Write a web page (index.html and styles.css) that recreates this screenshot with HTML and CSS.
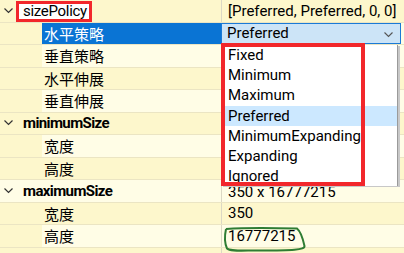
FILE: index.html
```html
<!DOCTYPE html>
<html lang="zh">
<head>
<meta charset="UTF-8">
<title>Property Editor</title>
<link rel="stylesheet" href="styles.css">
</head>
<body>
  <div class="tree">
    <div class="row group dark">
      <div class="label"><span class="arrow"><svg width="9" height="6" viewBox="0 0 9 6"><path d="M0.5 0.5 L4.5 4.5 L8.5 0.5" fill="none" stroke="#333" stroke-width="1.2"/></svg></span><span class="mark">sizePolicy</span></div>
      <div class="value">[Preferred, Preferred, 0, 0]</div>
    </div>
    <div class="row child light selected">
      <div class="label"><span class="indent"></span><span class="text">水平策略</span></div>
      <div class="value combo">Preferred<svg class="chev" width="9" height="6" viewBox="0 0 9 6"><path d="M0.5 0.5 L4.5 4.5 L8.5 0.5" fill="none" stroke="#555" stroke-width="1.1"/></svg></div>
    </div>
    <div class="row child light">
      <div class="label"><span class="indent"></span><span class="text">垂直策略</span></div>
      <div class="value"></div>
    </div>
    <div class="row child dark">
      <div class="label"><span class="indent"></span><span class="text">水平伸展</span></div>
      <div class="value"></div>
    </div>
    <div class="row child light">
      <div class="label"><span class="indent"></span><span class="text">垂直伸展</span></div>
      <div class="value"></div>
    </div>
    <div class="row group dark">
      <div class="label"><span class="arrow"><svg width="9" height="6" viewBox="0 0 9 6"><path d="M0.5 0.5 L4.5 4.5 L8.5 0.5" fill="none" stroke="#333" stroke-width="1.2"/></svg></span><span class="name">minimumSize</span></div>
      <div class="value"></div>
    </div>
    <div class="row child light">
      <div class="label"><span class="indent"></span><span class="text">宽度</span></div>
      <div class="value"></div>
    </div>
    <div class="row child dark">
      <div class="label"><span class="indent"></span><span class="text">高度</span></div>
      <div class="value"></div>
    </div>
    <div class="row group light">
      <div class="label"><span class="arrow"><svg width="9" height="6" viewBox="0 0 9 6"><path d="M0.5 0.5 L4.5 4.5 L8.5 0.5" fill="none" stroke="#333" stroke-width="1.2"/></svg></span><span class="name">maximumSize</span></div>
      <div class="value low">350 x 16777215</div>
    </div>
    <div class="row child dark">
      <div class="label"><span class="indent"></span><span class="text">宽度</span></div>
      <div class="value">350</div>
    </div>
    <div class="row child light">
      <div class="label"><span class="indent"></span><span class="text">高度</span></div>
      <div class="value">16777215</div>
    </div>
    <div class="row child dark last">
      <div class="label"><span class="indent"></span></div>
      <div class="value"></div>
    </div>
  </div>

  <ul class="popup">
    <li>Fixed</li>
    <li>Minimum</li>
    <li>Maximum</li>
    <li class="current">Preferred</li>
    <li>MinimumExpanding</li>
    <li>Expanding</li>
    <li>Ignored</li>
  </ul>
  <div class="redbox"></div>

  <svg class="loop" width="404" height="253" viewBox="0 0 404 253">
    <path d="M226 229 C245 227.5 280 228 297 228.5 C300 231 303 239 304.5 246 C305 250 292 250.5 260 250.5 C240 250.5 230 251.5 227 248.5 C225 244 224.5 236 226 229" fill="none" stroke="#2f7d34" stroke-width="2"/>
  </svg>
</body>
</html>
```

FILE: styles.css
```css
body {
  margin: 0;
  font-family: Roboto, "Noto Sans CJK SC", sans-serif;
  font-size: 15px;
  color: #000;
  background-color: #fdf7cc;
  overflow: hidden;
  height: 253px;
}
.tree {
  width: 404px;
}
.row {
  display: grid;
  grid-template-columns: 221px 1fr;
  height: 22.5px;
  box-sizing: border-box;
  border-bottom: 1px solid #ebe5c3;
}
.row.last {
  height: 6px;
}
.row.dark {
  background-color: #fdf7cc;
}
.row.light {
  background-color: #fffde6;
}
.label {
  display: flex;
  align-items: center;
  overflow: hidden;
  white-space: nowrap;
}
.arrow {
  width: 15px;
  display: flex;
  justify-content: center;
  padding-left: 1px;
}
.mark {
  align-self: stretch;
  background-color: #fff;
  border: 3px solid #f2272b;
  margin-top: 1px;
  padding: 0 2px 0 4px;
  display: flex;
  align-items: center;
  line-height: 1;
  letter-spacing: -0.3px;
}
.name {
  padding-left: 7px;
  font-weight: bold;
  letter-spacing: -0.6px;
}
.indent {
  width: 42px;
  align-self: stretch;
  background-color: #fdf7cc;
  flex: none;
}
.text {
  flex: 1;
  align-self: stretch;
  display: flex;
  align-items: center;
  padding-left: 2px;
}
.selected .text {
  background-color: #0a74d4;
  color: #fff;
}
.value {
  border-left: 1px solid #dcd8c4;
  padding-left: 6px;
  display: flex;
  align-items: center;
  white-space: nowrap;
  overflow: hidden;
}
.value.low {
  padding-top: 3px;
}
.value.combo {
  position: relative;
  margin-right: 3px;
  background-color: #cce4f7;
  border: 1px solid #1b7ad6;
  padding-left: 5px;
}
.chev {
  position: absolute;
  right: 7px;
  top: 8px;
}
.popup {
  position: absolute;
  left: 221px;
  top: 45px;
  width: 176px;
  height: 141px;
  margin: 0;
  padding: 0;
  list-style: none;
  background-color: #fff;
  border-right: 1px solid #9a9a9a;
  box-shadow: 2px 1px 0 #c8c8c8;
}
.popup li {
  height: 20.2px;
  line-height: 20px;
  padding-left: 7px;
}
.popup li.current {
  background-color: #cce8ff;
}
.redbox {
  position: absolute;
  left: 221px;
  top: 43px;
  width: 144px;
  height: 143px;
  box-sizing: border-box;
  border: 4px solid #f2272b;
}
.loop {
  position: absolute;
  left: 0;
  top: 0;
  pointer-events: none;
}
```
